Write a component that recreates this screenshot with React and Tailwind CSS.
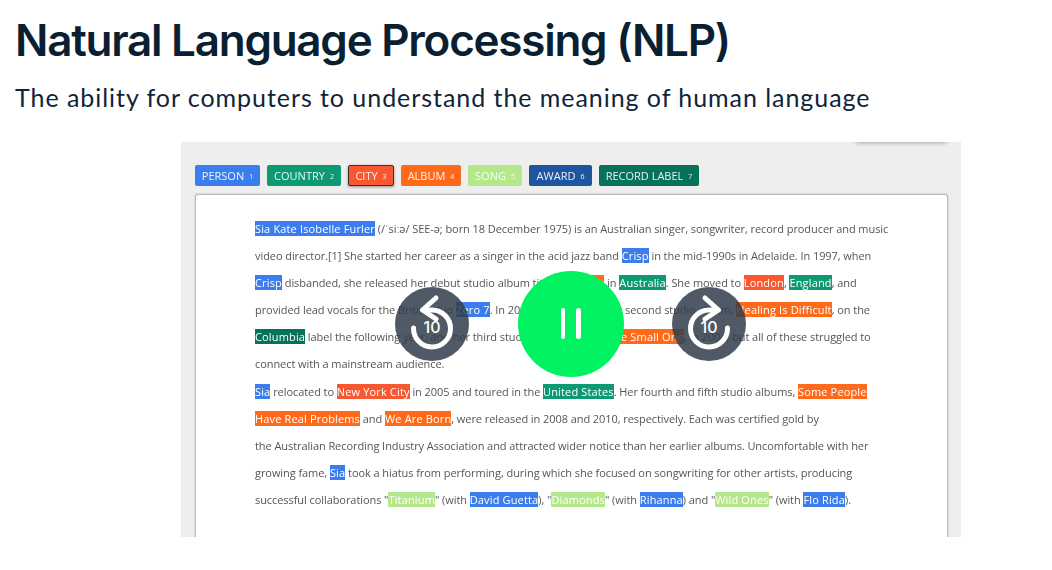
const Blue = ({ children }) => <span className="bg-[#3b7ded] text-white font-medium tracking-[0.15px]">{children}</span>;
const Green = ({ children }) => <span className="bg-[#0d9a72] text-white font-medium tracking-[0.15px]">{children}</span>;
const Red = ({ children }) => <span className="bg-[#f9572f] text-white font-medium tracking-[0.15px]">{children}</span>;
const Orange = ({ children }) => <span className="bg-[#ff6a1a] text-white font-medium tracking-[0.15px]">{children}</span>;
const Lime = ({ children }) => <span className="bg-[#b4e88a] text-white font-medium tracking-[0.15px]">{children}</span>;
const Teal = ({ children }) => <span className="bg-[#07725a] text-white font-medium tracking-[0.15px]">{children}</span>;

const tags = [
  ["PERSON", "1", "bg-[#3b7ded] w-[65px]"],
  ["COUNTRY", "2", "bg-[#0d9a72] w-[74px]"],
  ["CITY", "3", "bg-[#f9572f] w-[46px] border border-[#333333] shadow-[0_1px_3px_rgba(0,0,0,0.4)]"],
  ["ALBUM", "4", "bg-[#ff6a1a] w-[60px]"],
  ["SONG", "5", "bg-[#b4e88a] w-[54px]"],
  ["AWARD", "6", "bg-[#1f559f] w-[63px]"],
  ["RECORD LABEL", "7", "bg-[#07725a] w-[100px]"],
];

const lines = [
  <><Blue>Sia Kate Isobelle Furler</Blue> (/ˈsiːə/ SEE-ə; born 18 December 1975) is an Australian singer, songwriter, record producer and music</>,
  <>video director.[1] She started her career as a singer in the acid jazz band <Blue>Crisp</Blue> in the mid-1990s in Adelaide. In 1997, when</>,
  <><Blue>Crisp</Blue> disbanded, she released her debut studio album titled <Orange>OnlySee</Orange> in <Green>Australia</Green>. She moved to <Red>London</Red>, <Green>England</Green>, and</>,
  <>provided lead vocals for the British duo <Blue>Zero 7</Blue>. In 2004, she released her second studio album, <Orange>Healing Is Difficult</Orange>, on the</>,
  <><Teal>Columbia</Teal> label the following year, and her third studio album, <Orange>Colour the Small One</Orange>, in 2004, but all of these struggled to</>,
  <>connect with a mainstream audience.</>,
  <><Blue>Sia</Blue> relocated to <Red>New York City</Red> in 2005 and toured in the <Green>United States</Green>. Her fourth and fifth studio albums, <Orange>Some People </Orange></>,
  <><Orange>Have Real Problems</Orange> and <Orange>We Are Born</Orange>, were released in 2008 and 2010, respectively. Each was certified gold by</>,
  <>the Australian Recording Industry Association and attracted wider notice than her earlier albums. Uncomfortable with her</>,
  <>growing fame, <Blue>Sia</Blue> took a hiatus from performing, during which she focused on songwriting for other artists, producing</>,
  <>successful collaborations "<Lime>Titanium</Lime>" (with <Blue>David Guetta</Blue>), "<Lime>Diamonds</Lime>" (with <Blue>Rihanna</Blue>) and "<Lime>Wild Ones</Lime>" (with <Blue>Flo Rida</Blue>).</>,
];

function SeekIcon({ flip }) {
  return (
    <div className="relative w-[74px] h-[74px] rounded-full bg-[#303d4b]/85 text-white">
      <svg viewBox="0 0 74 74" className={flip ? "absolute inset-0 w-full h-full -scale-x-100" : "absolute inset-0 w-full h-full"} fill="none" stroke="currentColor" strokeWidth="5" strokeLinecap="round" strokeLinejoin="round">
        <path d="M28 23 L37 23 A18.5 18.5 0 1 1 18.5 41" />
        <path d="M41 11 L27.5 23 L41 32" />
      </svg>
      <span className="absolute left-0 right-0 top-[30px] text-center text-[16px] leading-5 font-medium font-['Inter',sans-serif]">10</span>
    </div>
  );
}

export default function App() {
  return (
    <div className="relative w-[1052px] h-[570px] overflow-hidden bg-white font-['Lato',sans-serif]">
      <h1 className="pl-[15px] pt-[13px] text-[44px] leading-[54px] font-semibold text-[#0b1f33] tracking-[-1.25px] font-['Inter',sans-serif]">Natural Language Processing (NLP)</h1>
      <p className="pl-[15px] pt-[14px] text-[25px] leading-[32px] text-[#0f2438] tracking-[0.95px]">The ability for computers to understand the meaning of human language</p>
      <div className="relative ml-[181px] mt-[29px] w-[780px] h-[395px] bg-[#eeeeee] overflow-hidden font-['Open_Sans',sans-serif]">
        <div className="absolute right-[14px] -top-[8px] w-[92px] h-[8px] bg-white rounded-b shadow-[0_1px_4px_rgba(0,0,0,0.3)]" />
        <div className="blur-[0.4px]">
          <div className="flex gap-[7px] pl-[14px] pt-[23px]">
            {tags.map(([name, n, cls]) => (
              <div key={name} className={`h-[21px] rounded-[2px] flex items-center justify-center pt-px text-[11px] text-white/90 ${cls}`}>
                {name}<span className="ml-[5px] text-[7px] mt-[2px]">{n}</span>
              </div>
            ))}
          </div>
          <div className="ml-[14px] mt-[8px] w-[753px] h-[343px] bg-white border border-[#bbbbbb] border-b-0 rounded-t-[3px] shadow-[0_0_2px_rgba(0,0,0,0.25)] pl-[59px] pt-[20px] text-[#555555] text-[11px] tracking-[-0.07px] leading-[27.1px] whitespace-nowrap">
            {lines.map((l, i) => <div key={i} className="h-[27.1px]">{l}</div>)}
          </div>
        </div>
      </div>
      <div className="absolute left-[395px] top-[287px]"><SeekIcon /></div>
      <div className="absolute left-[672px] top-[287px]"><SeekIcon flip /></div>
      <div className="absolute left-[518px] top-[271px] w-[105.6px] h-[105.6px] rounded-full bg-[#00f260] flex items-center justify-center gap-[11px]">
        <span className="w-[4.4px] h-[31px] rounded-full bg-white" />
        <span className="w-[4.4px] h-[31px] rounded-full bg-white" />
      </div>
    </div>
  );
}
